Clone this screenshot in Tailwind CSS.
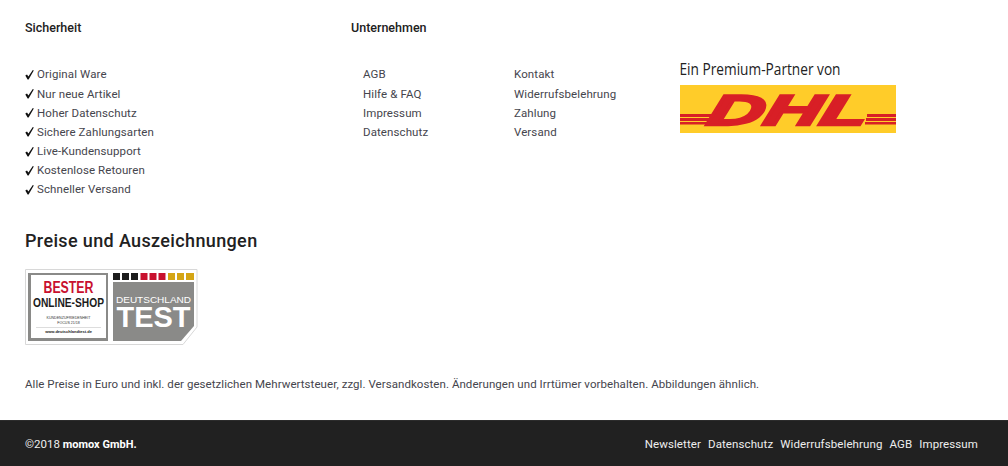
<!DOCTYPE html>
<html lang="de">
<head>
    <meta charset="UTF-8">
    <meta name="viewport" content="width=device-width, initial-scale=1.0">
    <title>momox Footer</title>
    <script src="https://cdn.jsdelivr.net/npm/@tailwindcss/browser@4"></script>
</head>
<body class="bg-white font-['Roboto',sans-serif] antialiased">
    <div class="h-[420px] px-[25px] pt-[19px] overflow-hidden">
        <div class="flex h-[190px]">
            <!-- Sicherheit -->
            <div class="w-[326px]">
                <h4 class="text-[12.5px] leading-[17px] font-medium text-[#212121]">Sicherheit</h4>
                <ul class="mt-[29.4px] text-[11.5px] leading-[19.17px] tracking-[0.1px] text-[#45454d]">
                    <li class="flex items-center gap-[3px]"><svg width="9" height="10" viewBox="0 0 9 10" class="fill-[#111]"><path d="M0.3 5.5L2 4.5L3.4 6.5L7.8 0L8.8 0.4L3.6 9.4H2.6Z"/></svg>Original Ware</li>
                    <li class="flex items-center gap-[3px]"><svg width="9" height="10" viewBox="0 0 9 10" class="fill-[#111]"><path d="M0.3 5.5L2 4.5L3.4 6.5L7.8 0L8.8 0.4L3.6 9.4H2.6Z"/></svg>Nur neue Artikel</li>
                    <li class="flex items-center gap-[3px]"><svg width="9" height="10" viewBox="0 0 9 10" class="fill-[#111]"><path d="M0.3 5.5L2 4.5L3.4 6.5L7.8 0L8.8 0.4L3.6 9.4H2.6Z"/></svg>Hoher Datenschutz</li>
                    <li class="flex items-center gap-[3px]"><svg width="9" height="10" viewBox="0 0 9 10" class="fill-[#111]"><path d="M0.3 5.5L2 4.5L3.4 6.5L7.8 0L8.8 0.4L3.6 9.4H2.6Z"/></svg>Sichere Zahlungsarten</li>
                    <li class="flex items-center gap-[3px]"><svg width="9" height="10" viewBox="0 0 9 10" class="fill-[#111]"><path d="M0.3 5.5L2 4.5L3.4 6.5L7.8 0L8.8 0.4L3.6 9.4H2.6Z"/></svg>Live-Kundensupport</li>
                    <li class="flex items-center gap-[3px]"><svg width="9" height="10" viewBox="0 0 9 10" class="fill-[#111]"><path d="M0.3 5.5L2 4.5L3.4 6.5L7.8 0L8.8 0.4L3.6 9.4H2.6Z"/></svg>Kostenlose Retouren</li>
                    <li class="flex items-center gap-[3px]"><svg width="9" height="10" viewBox="0 0 9 10" class="fill-[#111]"><path d="M0.3 5.5L2 4.5L3.4 6.5L7.8 0L8.8 0.4L3.6 9.4H2.6Z"/></svg>Schneller Versand</li>
                </ul>
            </div>
            <!-- Unternehmen -->
            <div class="w-[329px]">
                <h4 class="text-[12.5px] leading-[17px] font-medium text-[#212121]">Unternehmen</h4>
                <div class="mt-[29.4px] pl-3 flex text-[11.5px] leading-[19.17px] tracking-[0.1px] text-[#45454d]">
                    <ul class="w-[151px]">
                        <li>AGB</li>
                        <li>Hilfe &amp; FAQ</li>
                        <li>Impressum</li>
                        <li>Datenschutz</li>
                    </ul>
                    <ul>
                        <li>Kontakt</li>
                        <li>Widerrufsbelehrung</li>
                        <li>Zahlung</li>
                        <li>Versand</li>
                    </ul>
                </div>
            </div>
            <!-- DHL -->
            <div class="pt-[40px]">
                <svg width="216" height="22" viewBox="0 0 216 22" class="block">
                    <text x="-0.5" y="16" font-family="Open Sans" font-size="16" fill="#222" textLength="161" lengthAdjust="spacingAndGlyphs">Ein Premium-Partner von</text>
                </svg>
                <svg width="216" height="48" viewBox="0 0 216 48" class="block mt-1">
                    <rect width="216" height="48" fill="#ffcc29"/>
                    <g fill="#d81f26">
                        <rect x="0" y="29" width="33" height="3"/>
                        <rect x="0" y="33" width="30" height="3"/>
                        <rect x="0" y="37" width="28" height="2.5"/>
                        <rect x="187" y="29" width="29" height="3"/>
                        <rect x="186" y="33" width="30" height="3"/>
                        <rect x="185" y="37" width="31" height="2.5"/>
                    </g>
                    <text x="36" y="40" transform="skewX(-15)" font-family="Liberation Sans" font-weight="700" font-style="italic" font-size="43" fill="#d81f26" stroke="#d81f26" stroke-width="2.4" textLength="160" lengthAdjust="spacingAndGlyphs">DHL</text>
                </svg>
            </div>
        </div>

        <h3 class="mt-[20px] text-[18px] leading-[24px] font-medium tracking-[0.36px] text-[#212121]">Preise und Auszeichnungen</h3>

        <!-- Siegel -->
        <svg width="173" height="77" viewBox="0 0 173 77" class="block mt-4">
            <path d="M0.5 0.5H172V58L158 75.5H0.5Z" fill="#fff" stroke="#d8d8d8"/>
            <rect x="3" y="4" width="80" height="68" fill="#8a8a88"/>
            <rect x="6" y="6" width="75" height="63" fill="#fff"/>
            <text x="43.5" y="24" text-anchor="middle" font-family="Liberation Sans" font-weight="700" font-size="16" fill="#c8102e" textLength="50" lengthAdjust="spacingAndGlyphs">BESTER</text>
            <text x="43.5" y="38" text-anchor="middle" font-family="Liberation Sans" font-weight="700" font-size="13.5" fill="#1c1c1c" textLength="71" lengthAdjust="spacingAndGlyphs">ONLINE-SHOP</text>
            <text x="43.5" y="50" text-anchor="middle" font-family="Liberation Sans" font-size="3.6" fill="#333">KUNDENZUFRIEDENHEIT</text>
            <text x="43.5" y="55" text-anchor="middle" font-family="Liberation Sans" font-size="3.6" fill="#333">FOCUS 21/18</text>
            <rect x="11" y="58" width="65" height="0.5" fill="#bbb"/>
            <text x="43.5" y="64" text-anchor="middle" font-family="Liberation Sans" font-weight="700" font-size="4" fill="#222">www.deutschlandtest.de</text>
            <g fill="#1c1c1c">
                <rect x="88" y="4" width="7" height="7"/><rect x="97" y="4" width="7" height="7"/><rect x="106" y="4" width="7" height="7"/>
            </g>
            <g fill="#c8102e">
                <rect x="115.5" y="4" width="7" height="7"/><rect x="124.5" y="4" width="7" height="7"/><rect x="133.5" y="4" width="7" height="7"/>
            </g>
            <g fill="#d4a514">
                <rect x="143" y="4" width="7" height="7"/><rect x="152" y="4" width="7" height="7"/><rect x="161" y="4" width="8" height="7"/>
            </g>
            <path d="M88 13H169V57L156 72H88Z" fill="#8a8a88"/>
            <text x="128.5" y="33.5" text-anchor="middle" font-family="Liberation Sans" font-size="9.5" fill="#fff" textLength="75" lengthAdjust="spacingAndGlyphs">DEUTSCHLAND</text>
            <text x="128.5" y="58" text-anchor="middle" font-family="Liberation Sans" font-weight="700" font-size="30" fill="#fff" textLength="74" lengthAdjust="spacingAndGlyphs">TEST</text>
        </svg>

        <p class="mt-[30px] text-[11.5px] leading-[16px] tracking-[0.06px] text-[#45454d]">Alle Preise in Euro und inkl. der gesetzlichen Mehrwertsteuer, zzgl. Versandkosten. Änderungen und Irrtümer vorbehalten. Abbildungen ähnlich.</p>
    </div>

    <footer class="h-[46px] bg-[#212121] border-t border-[#2c2c2c] px-[25px] pr-[30px] pt-[3px] flex items-center justify-between text-[11.5px] tracking-[0.1px] text-[#eeeeee]">
        <p class="tracking-normal">©2018 <span class="font-bold text-white text-[11px]">momox GmbH.</span></p>
        <nav class="flex gap-[7px]">
            <a>Newsletter</a>
            <a>Datenschutz</a>
            <a>Widerrufsbelehrung</a>
            <a>AGB</a>
            <a>Impressum</a>
        </nav>
    </footer>
</body>
</html>
